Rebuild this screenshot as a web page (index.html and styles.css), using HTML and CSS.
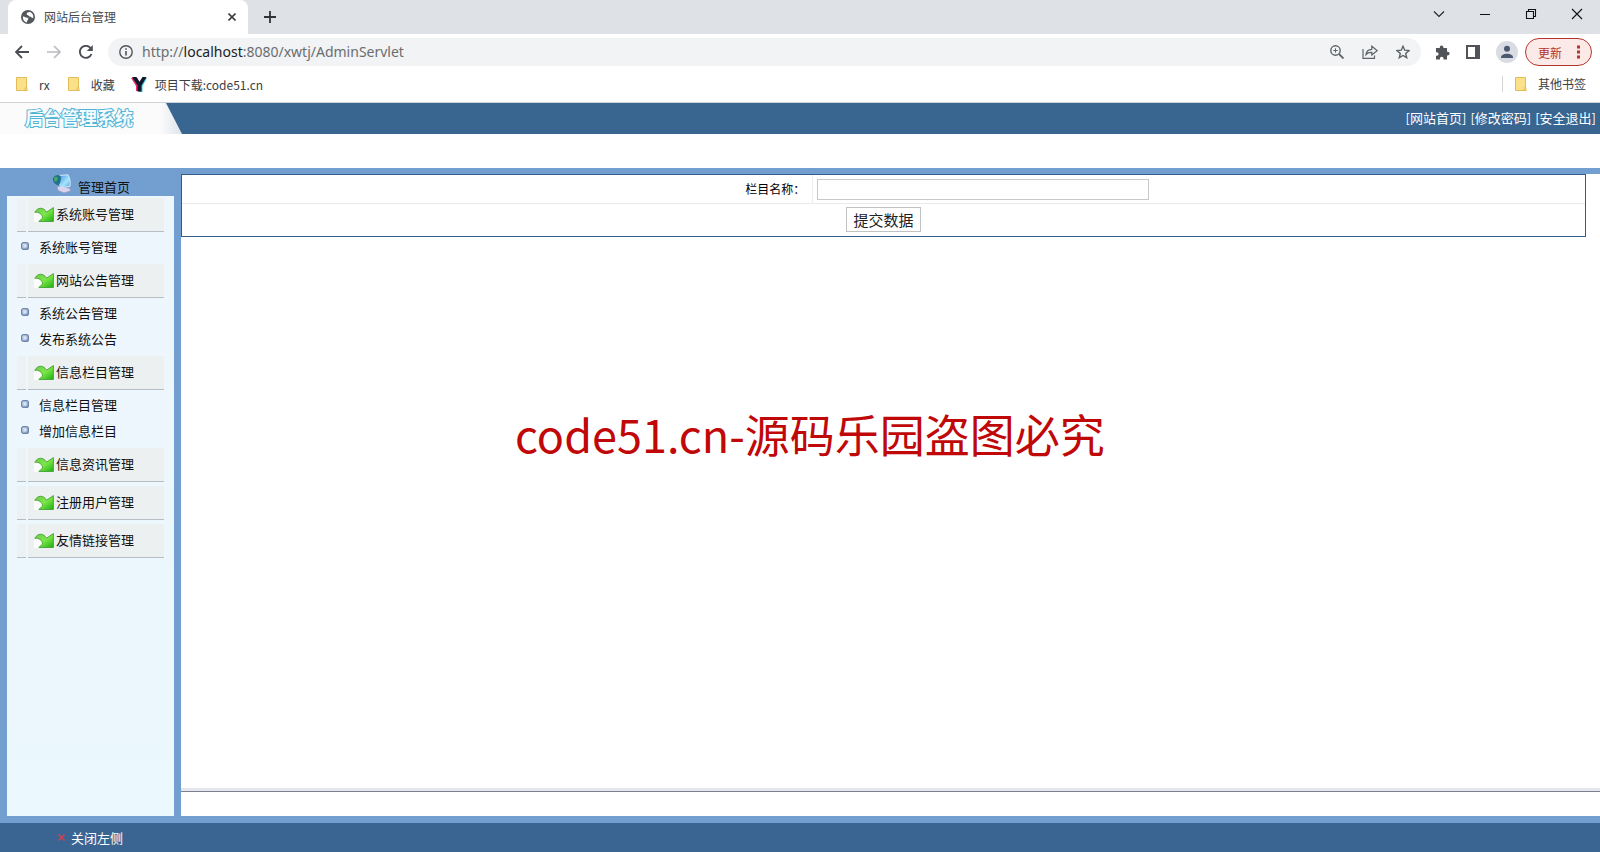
FILE: index.html
```html
<!DOCTYPE html>
<html lang="zh-CN">
<head>
<meta charset="utf-8">
<title>网站后台管理</title>
<link rel="stylesheet" href="styles.css">
</head>
<body>
<svg class="defs" aria-hidden="true">
  <defs>
    <linearGradient id="green" x1="0" y1="0" x2="1" y2="1"><stop offset="0" stop-color="#6cc84e"/><stop offset=".5" stop-color="#7de848"/><stop offset="1" stop-color="#1fae12"/></linearGradient>
    <linearGradient id="dot" x1="0" y1="0" x2="1" y2="1"><stop offset="0" stop-color="#d5e0ef"/><stop offset="1" stop-color="#7f9cc6"/></linearGradient>
    <linearGradient id="screen" x1="0" y1="0" x2="1" y2="1"><stop offset="0" stop-color="#3f8fe0"/><stop offset=".6" stop-color="#a5e4fb"/><stop offset="1" stop-color="#5c9fe6"/></linearGradient>
    <symbol id="arrow" viewBox="0 0 20 15"><path d="M0 5h19v10H0Z" fill="#fbfdfb"/><path d="M.8 5.300C3.500.2 9.500-.3 12.500 5.200L19.400.6V14.500H4.800L8.600 11C8.200 7 5 4.800.8 5.300Z" fill="url(#green)" stroke="#43a032" stroke-width=".9"/></symbol>
    <symbol id="bullet" viewBox="0 0 8 8"><rect x=".6" y=".6" width="6.800" height="6.800" rx="2" fill="url(#dot)" stroke="#6f84aa" stroke-width="1.200"/><rect x="2.500" y="2.500" width="3" height="3" fill="#dbe5f2"/></symbol>
    <symbol id="folder" viewBox="0 0 12 14"><path d="M.5.5h10v9.500l.8 3.500H.5Z" fill="#fbe08a" stroke="#e3bd57"/><path d="M8.500 13.500l1.500-3.500" fill="none" stroke="#e3bd57"/></symbol>
  </defs>
</svg>

<div class="page">
  <header class="browser">
    <div class="tabs">
      <div class="tab">
        <svg class="globe" viewBox="0 0 14 14"><circle cx="7" cy="7" r="7" fill="#54585d"/><path d="M2 6.500C3.500 6 4 7.500 5.500 7.500S8 8.500 7 9.500 6.200 12 5.500 12.400C3 11.500 1.500 9.500 2 6.500ZM6.500 2.500C8.500 1.500 10 2 11.200 3.500 12.300 5 12.500 6.500 12.200 8 10.500 8.500 10.500 6.500 8.800 6.500 7.500 6.500 7.800 5 6.500 5S5.500 3.500 6.500 2.500Z" fill="#fff"/></svg>
        <span class="tab-title">网站后台管理</span>
        <button class="icon-btn" aria-label="关闭标签页"><svg width="8" height="8" viewBox="0 0 8 8"><path d="M.5.5l7 7M7.500.5l-7 7" stroke="#3c4043" stroke-width="1.600"/></svg></button>
      </div>
      <button class="icon-btn" aria-label="新标签页"><svg width="12" height="12" viewBox="0 0 12 12"><path d="M6 0v12M0 6h12" stroke="#303438" stroke-width="1.800"/></svg></button>
      <div class="window-buttons">
        <button class="icon-btn" aria-label="搜索标签页"><svg width="12" height="12" viewBox="0 0 12 12"><path d="M1 3.500l5 5 5-5" fill="none" stroke="#222" stroke-width="1.100"/></svg></button>
        <button class="icon-btn" aria-label="最小化"><svg width="12" height="12" viewBox="0 0 12 12"><path d="M1 6.500h10" stroke="#111"/></svg></button>
        <button class="icon-btn" aria-label="还原"><svg width="12" height="12" viewBox="0 0 12 12"><path d="M1.500 3.500h7v7h-7zM3.500 3V1.500h7v7H9" fill="none" stroke="#111" stroke-width="1.100"/></svg></button>
        <button class="icon-btn" aria-label="关闭"><svg width="12" height="12" viewBox="0 0 12 12"><path d="M1 1l10 10M11 1L1 11" stroke="#111" stroke-width="1.100"/></svg></button>
      </div>
    </div>

    <div class="toolbar">
      <div class="nav">
        <button class="icon-btn" aria-label="后退"><svg width="14" height="14" viewBox="0 0 14 14"><path d="M14 7H1.500M7 1L1 7l6 6" fill="none" stroke="#4b4f54" stroke-width="1.800"/></svg></button>
        <button class="icon-btn" aria-label="前进"><svg width="14" height="14" viewBox="0 0 14 14"><path d="M0 7h12.500M7 1l6 6-6 6" fill="none" stroke="#b9bbbe" stroke-width="1.600"/></svg></button>
        <button class="icon-btn" aria-label="刷新"><svg width="14" height="14" viewBox="0 0 14 14"><path d="M12.500 9A6 6 0 1 1 11.500 3L12.500 4.500" fill="none" stroke="#4b4f54" stroke-width="1.900"/><path d="M13.800 0v6H7.800Z" fill="#4b4f54"/></svg></button>
      </div>
      <div class="omnibox">
        <svg width="14" height="14" viewBox="0 0 14 14"><circle cx="7" cy="7" r="6.200" fill="none" stroke="#505459" stroke-width="1.400"/><path d="M7 6v4.500M7 3.200v1.600" stroke="#505459" stroke-width="1.600"/></svg>
        <span class="url">http://<b>localhost</b>:8080/xwtj/AdminServlet</span>
        <button class="icon-btn" aria-label="缩放"><svg width="14" height="14" viewBox="0 0 14 14"><circle cx="5.500" cy="5.500" r="4.700" fill="none" stroke="#5f6368" stroke-width="1.400"/><path d="M9 9l4.500 4.500" stroke="#5f6368" stroke-width="1.800"/><path d="M5.500 3.300v4.400M3.300 5.500h4.400" stroke="#5f6368"/></svg></button>
        <button class="icon-btn" aria-label="分享"><svg width="16" height="14" viewBox="0 0 16 14"><path d="M1 4v9.300h11.500V10.500M4 9.500C4.300 6.500 6.500 4.500 9.800 4.300V1.200l5.300 4.400-5.300 4.300V7.300C7.500 7.200 5.500 7.700 4 9.500Z" fill="none" stroke="#5f6368" stroke-width="1.200"/></svg></button>
        <button class="icon-btn" aria-label="收藏此页"><svg width="14" height="14" viewBox="0 0 14 14"><path d="M7 1.200l1.700 4 4.300.4-3.300 2.900 1 4.200L7 10.500l-3.700 2.200 1-4.200L1 5.600l4.300-.4Z" fill="none" stroke="#5f6368" stroke-width="1.400"/></svg></button>
      </div>
      <div class="tools">
        <button class="icon-btn" aria-label="扩展程序"><svg width="15" height="15" viewBox="0 0 15 15"><path d="M1 3h3.800V2.200a1.800 1.800 0 1 1 3.600 0V3H12V6.800h.8a1.800 1.800 0 1 1 0 3.600H12V14.500H8.500V13.500a1.800 1.800 0 1 0-3.600 0v1H1V10.800h.8a1.800 1.800 0 1 0 0-3.600H1Z" fill="#505459"/></svg></button>
        <button class="icon-btn" aria-label="侧边栏"><svg width="14" height="14" viewBox="0 0 14 14"><path d="M1 1h12v12H1Z" fill="none" stroke="#505459" stroke-width="2"/><path d="M9 1h4v12H9Z" fill="#505459"/></svg></button>
        <button class="icon-btn" aria-label="用户"><svg width="22" height="22" viewBox="0 0 22 22"><circle cx="11" cy="11" r="11" fill="#d9dce2"/><circle cx="11" cy="7.800" r="3" fill="#4b5872"/><path d="M5 16.500c0-5 12-5 12 0v.5H5Z" fill="#4b5872"/></svg></button>
        <button class="update">更新<svg width="3" height="14" viewBox="0 0 3 14"><path d="M0 .5h3v3H0zM0 5.500h3v3H0zM0 10.500h3v3H0z" fill="#b3352b"/></svg></button>
      </div>
    </div>

    <nav class="bookmarks">
      <a href="#"><svg class="folder"><use href="#folder"/></svg>rx</a>
      <a href="#"><svg class="folder"><use href="#folder"/></svg>收藏</a>
      <a href="#" class="site"><svg width="16" height="15" viewBox="0 0 16 15"><path d="M0 1h5l3.500 4.500L12 1h3L10 9v5H5V9Z" fill="#e8306c"/><path d="M2 1h4l3 4.500L12.500 1H16l-4.500 8v6H7.500V9Z" fill="#37c8da"/><path d="M1 0h4.500l3 4.800L11.500 0H15.500L10.500 8.500v6h-4v-6Z" fill="#12152c"/></svg>项目下载:code51.cn</a>
      <a href="#" class="other"><svg class="folder"><use href="#folder"/></svg>其他书签</a>
    </nav>
  </header>

  <div class="banner">
    <div class="brand-wrap"><h1 class="brand">后台管理系统</h1></div>
    <nav class="account"><a href="#">[网站首页]</a><a href="#">[修改密码]</a><a href="#">[安全退出]</a></nav>
  </div>

  <div class="frame">
    <aside class="side">
      <a href="#" class="home"><svg width="20" height="20" viewBox="0 0 20 20"><path d="M5 12.500L9 12l9 2.500.5 2.500-6.500 2-6-2.500Z" fill="#d9d3ec" stroke="#8f93c4" stroke-width=".7"/><path d="M7 1.500L16 .8C18 4 18.500 8 18 12.500L9.500 13.500C7 10 6 6 7 1.500Z" fill="url(#screen)" stroke="#d4e8f8"/><path d="M.8 4.500C2.500 1 6.500.2 8.500 2 9.500 5 8.500 9 6.500 11.500 3 10.500.5 7.500.8 4.500Z" fill="#246f8c"/><path d="M2 3.500C4.500 1.800 6.500 3 5.500 5.500S3.500 8 2.500 7Z" fill="#3fae62"/></svg><span>管理首页</span></a>
      <nav class="menu">
        <section><h2><a href="#"><svg class="arrow"><use href="#arrow"/></svg>系统账号管理</a></h2>
          <ul><li><a href="#"><svg class="bullet"><use href="#bullet"/></svg>系统账号管理</a></li></ul></section>
        <section><h2><a href="#"><svg class="arrow"><use href="#arrow"/></svg>网站公告管理</a></h2>
          <ul><li><a href="#"><svg class="bullet"><use href="#bullet"/></svg>系统公告管理</a></li><li><a href="#"><svg class="bullet"><use href="#bullet"/></svg>发布系统公告</a></li></ul></section>
        <section><h2><a href="#"><svg class="arrow"><use href="#arrow"/></svg>信息栏目管理</a></h2>
          <ul><li><a href="#"><svg class="bullet"><use href="#bullet"/></svg>信息栏目管理</a></li><li><a href="#"><svg class="bullet"><use href="#bullet"/></svg>增加信息栏目</a></li></ul></section>
        <section><h2><a href="#"><svg class="arrow"><use href="#arrow"/></svg>信息资讯管理</a></h2></section>
        <section><h2><a href="#"><svg class="arrow"><use href="#arrow"/></svg>注册用户管理</a></h2></section>
        <section><h2><a href="#"><svg class="arrow"><use href="#arrow"/></svg>友情链接管理</a></h2></section>
      </nav>
    </aside>
    <main class="content">
      <div class="view">
        <form class="form">
          <div class="field">
            <label for="column-name">栏目名称：</label>
            <div class="value"><input id="column-name" type="text"></div>
          </div>
          <div class="actions"><button type="button">提交数据</button></div>
        </form>
      </div>
      <div class="lower"></div>
    </main>
  </div>

  <footer class="footer"><button><svg width="7" height="7" viewBox="0 0 7 7"><path d="M.5.5l6 6M6.500.5l-6 6" stroke="#cf4350" stroke-width="1.500"/></svg>关闭左侧</button></footer>
  <div class="watermark">code51.cn-源码乐园盗图必究</div>
</div>
</body>
</html>
```
FILE: styles.css
```css
* { box-sizing: border-box; }

body {
  margin: 0;
  font-family: "Noto Sans CJK SC", sans-serif;
  font-size: 13px;
  color: #111;
  background: #fff;
}

a { color: inherit; text-decoration: none; }
button { font-family: inherit; border: 0; padding: 0; background: none; color: inherit; }
svg { display: block; flex: none; }
.defs { position: absolute; width: 0; height: 0; }

.page { position: relative; display: flex; flex-direction: column; min-height: 100vh; }

/* Browser chrome */
.icon-btn { display: flex; align-items: center; justify-content: center; }

.tabs { display: flex; align-items: center; gap: 16px; height: 34px; padding: 0 17px 0 8px; background: #dee1e6; }
.tab {
  display: flex;
  align-items: center;
  gap: 9px;
  width: 240px;
  height: 34px;
  padding: 0 12px 0 13px;
  border-radius: 8px 8px 0 0;
  background: #fff;
}
.globe { width: 14px; height: 14px; }
.tab-title { flex: 1; padding-bottom: 2px; font-size: 12px; color: #45484c; }
.window-buttons { display: flex; gap: 34px; margin-left: auto; padding-bottom: 6px; }

.toolbar { display: flex; align-items: center; height: 36px; padding: 0 8px 0 15px; }
.nav { display: flex; gap: 18px; margin-right: 15px; }
.omnibox {
  display: flex;
  flex: 1;
  align-items: center;
  gap: 18px;
  height: 28px;
  padding: 0 11px;
  border-radius: 14px;
  background: #f1f3f4;
}
.url { flex: 1; margin-left: -9px; padding-bottom: 1px; font-family: "Noto Sans", sans-serif; font-size: 14px; color: #6a6d71; }
.url b { font-weight: 400; color: #202124; }
.tools { display: flex; align-items: center; gap: 16px; margin-left: 14px; }
.tools .update {
  display: flex;
  align-items: center;
  justify-content: space-between;
  width: 67px;
  height: 28px;
  margin-left: -9px;
  padding: 0 11px 0 12px;
  border: 1px solid #b3352b;
  border-radius: 14px;
  background: #fbeae8;
  color: #b3352b;
  font-size: 12px;
}

.bookmarks {
  display: flex;
  align-items: center;
  gap: 18px;
  height: 33px;
  padding: 0 14px 4px 16px;
  border-bottom: 1px solid #d0d4d8;
  font-size: 12px;
  color: #3c4043;
}
.bookmarks a { display: flex; align-items: center; gap: 11px; }
.bookmarks .site { gap: 8px; margin-left: -2px; }
.bookmarks .other { margin-left: auto; padding-left: 12px; border-left: 1px solid #d4d7da; line-height: 16px; }
.folder { width: 12px; height: 14px; }

/* Banner */
.banner { display: flex; justify-content: space-between; height: 31px; margin-bottom: 34px; background: #396591; }
.brand-wrap {
  width: 182px;
  padding-left: 25px;
  background: linear-gradient(90deg, #fbfbfb 88%, #dde5ee);
  clip-path: polygon(0 0, 166px 0, 100% 100%, 0 100%);
}
.brand {
  margin: 0;
  font-size: 18px;
  line-height: 29px;
  font-weight: 700;
  color: #f4fcff;
  -webkit-text-stroke: 2px #53b4d4;
  paint-order: stroke fill;
}
.account { display: flex; align-items: center; gap: 4px; padding: 0 4px 2px 0; color: #fff; }

/* Frame */
.frame { display: flex; flex: 1; padding-bottom: 7px; background: #739fd0; }
.side { display: flex; flex-direction: column; width: 181px; padding: 0 7px; }
.home { display: flex; align-items: flex-end; gap: 6px; height: 28px; padding-left: 45px; line-height: 18px; }
.home svg { margin-bottom: 2px; }
.menu { flex: 1; padding: 2px 10px 0; background: linear-gradient(#eef6fd, #ebf8fe); }
.menu section { margin-bottom: 4px; }
.menu h2 { display: flex; gap: 2px; height: 34px; margin: 0; font-size: 13px; font-weight: 400; }
.menu h2::before { content: ""; width: 9px; background: #ecf1f3; border-bottom: 1px solid #b7bec3; }
.menu h2 a {
  display: flex;
  flex: 1;
  align-items: center;
  gap: 2px;
  padding: 0 0 2px 6px;
  background: #ecf0f1;
  border-bottom: 1px solid #b7bec3;
}
.arrow { width: 20px; height: 15px; margin-top: 2px; }
.menu ul { margin: 0; padding: 2px 0 0; list-style: none; }
.menu li a { display: flex; align-items: center; gap: 10px; height: 26px; padding: 0 0 2px 4px; }
.bullet { width: 8px; height: 8px; }

.content { display: flex; flex: 1; flex-direction: column; padding-top: 6px; }
.view { flex: 1; padding-right: 14px; background: #fff; border-bottom: 1px solid #7c8091; box-shadow: inset 0 -3px #e4e6ec; }
.lower { height: 24px; background: #fff; }

.form { border: 1px solid #315c88; background: #fff; }
.field { display: grid; grid-template-columns: 45% 1fr; border-bottom: 1px solid #e8eaec; }
.field label { padding-right: 7px; border-right: 1px solid #eceef0; font-size: 12px; line-height: 28px; text-align: right; color: #000; }
.value { display: flex; align-items: center; padding-left: 4px; }
.value input { width: 332px; height: 21px; border: 1px solid #c6c8ca; background: #fff; }
.actions { display: flex; justify-content: center; padding: 3px 0 4px; }
.actions button { height: 25px; padding: 0 6px; border: 1px solid #c0c2c4; background: #fff; font-size: 15px; line-height: 20px; color: #222; }

.footer { height: 29px; background: #3a6593; color: #fff; }
.footer button { display: flex; align-items: center; gap: 6px; height: 29px; padding-left: 58px; font-size: 13px; }

/* Overlay text across the page */
.watermark {
  position: absolute;
  top: 401px;
  left: 515px;
  font-size: 45px;
  line-height: 66px;
  white-space: nowrap;
  color: #c00808;
  pointer-events: none;
}
```
